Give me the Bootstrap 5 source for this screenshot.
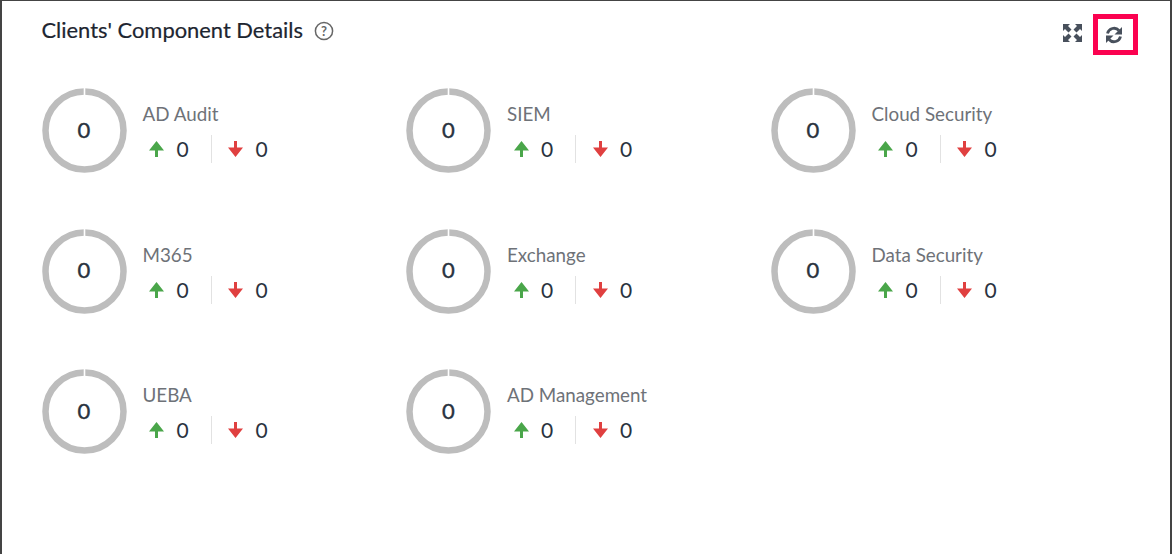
<!DOCTYPE html>
<html lang="en">

<head>
  <meta charset="UTF-8" />
  <title>Clients' Component Details</title>
  <link href="https://cdn.jsdelivr.net/npm/bootstrap@5.3.0/dist/css/bootstrap.min.css" rel="stylesheet" />
  <style>
    html, body { height: 100%; overflow: hidden; }
    body { font-family: Lato, "Liberation Sans", sans-serif; background: #fff; color: #222b38; }
    .panel-box { height: 554px; border-top: 1px solid #444; border-left: 2px solid #444; border-right: 2px solid #444; padding: 0 0 0 40px; }
    .panel-head { height: 62px; padding-right: 32px; padding-top: 14px; }
    .panel-title { font-size: 21.9px; font-weight: 400; color: #1d2530; margin: 0 0 0 -.5px; line-height: 30px; -webkit-text-stroke: .2px #1d2530; }
    .help-icon { margin-left: 10px; margin-top: 5px; }
    .expand-icon { margin-top: 9px; }
    .refresh-box { width: 45px; height: 41px; border: 5px solid #fb0250; margin-top: -1px; margin-left: 11px; padding-right: 3px; }
    .comp-grid { display: grid; grid-template-columns: repeat(3, 364.5px); grid-auto-rows: 140.5px; padding-top: 25px; margin-left: -.5px; }
    .ring-wrap { width: 85px; height: 85px; font-size: 22px; color: #2a3340; -webkit-text-stroke: .4px #2a3340; padding-bottom: 3px; }
    .ring-wrap svg { position: absolute; left: 0; top: 0; }
    .comp-name { font-size: 18.8px; line-height: 24px; color: #6e7278; margin-left: 16px; margin-top: 14px; }
    .comp-stats { margin-left: 22.5px; margin-top: 10px; height: 26px; font-size: 21px; line-height: 26px; color: #2a3340; }
    .stat-num { margin-left: 12.5px; width: 12px; }
    .stat-sep { width: 1px; height: 28px; background: #e2e2e2; margin: 0 16.5px 0 22px; }
  </style>
</head>

<body>
  <div class="panel-box">
    <div class="panel-head d-flex align-items-start">
      <h5 class="panel-title">Clients' Component Details</h5>
      <svg class="help-icon" width="22" height="22" viewBox="0 0 22 22">
        <circle cx="11" cy="11" r="8.600" fill="none" stroke="#666" stroke-width="1.500" />
        <text x="11" y="15.500" text-anchor="middle" font-size="13" font-weight="700" fill="#666" font-family="Lato">?</text>
      </svg>
      <svg class="expand-icon ms-auto" width="19" height="18" viewBox="0 0 19 18" fill="#48505c">
        <path d="M0 0h7L5 2l3.500 3.500-3 3L2 5 0 7zM19 0h-7l2 2-3.500 3.500 3 3L17 5l2 2zM0 18h7l-2-2 3.500-3.500-3-3L2 13l-2-2zM19 18h-7l2-2-3.500-3.500 3-3L17 13l2-2z" />
      </svg>
      <div class="refresh-box d-flex align-items-center justify-content-center">
        <svg width="18" height="18" viewBox="0 0 18 18" fill="none" stroke="#48505c" stroke-width="2.800">
          <path d="M2.500 7.500A6.700 6.700 0 0 1 14 4.500" />
          <path d="M15.500 10.500A6.700 6.700 0 0 1 4 13.500" />
          <path d="M17 1v7.500H9.500z" fill="#48505c" stroke="none" />
          <path d="M1 17V9.500H8.500z" fill="#48505c" stroke="none" />
        </svg>
      </div>
    </div>

    <div class="comp-grid" id="grid"></div>
  </div>

  <script>
    const items = ["AD Audit", "SIEM", "Cloud Security", "M365", "Exchange", "Data Security", "UEBA", "AD Management"];
    const grid = document.getElementById("grid");

    items.forEach((name) => {
      const el = document.createElement("div");
      el.className = "d-flex align-items-start";
      el.innerHTML = `
        <div class="ring-wrap position-relative d-flex align-items-center justify-content-center flex-shrink-0">
          <svg width="85" height="85" viewBox="0 0 85 85">
            <circle cx="42.500" cy="42.500" r="39" fill="none" stroke="#bdbdbd" stroke-width="6.500" />
            <rect x="41.700" y="0" width="1.600" height="8" fill="#fff" />
          </svg>
          <span class="position-relative">0</span>
        </div>
        <div>
          <div class="comp-name">${name}</div>
          <div class="comp-stats d-flex align-items-center">
            <svg width="15" height="16" viewBox="0 0 15 16"><path d="M7.500 0 15 9.500H9V16H6V9.500H0z" fill="#4aa64a" /></svg>
            <span class="stat-num">0</span>
            <span class="stat-sep"></span>
            <svg width="15" height="16" viewBox="0 0 15 16"><path d="M7.500 16 15 6.500H9V0H6v6.500H0z" fill="#e04040" /></svg>
            <span class="stat-num">0</span>
          </div>
        </div>`;
      grid.appendChild(el);
    });
  </script>
  <script src="https://cdn.jsdelivr.net/npm/bootstrap@5.3.0/dist/js/bootstrap.bundle.min.js"></script>
</body>

</html>
